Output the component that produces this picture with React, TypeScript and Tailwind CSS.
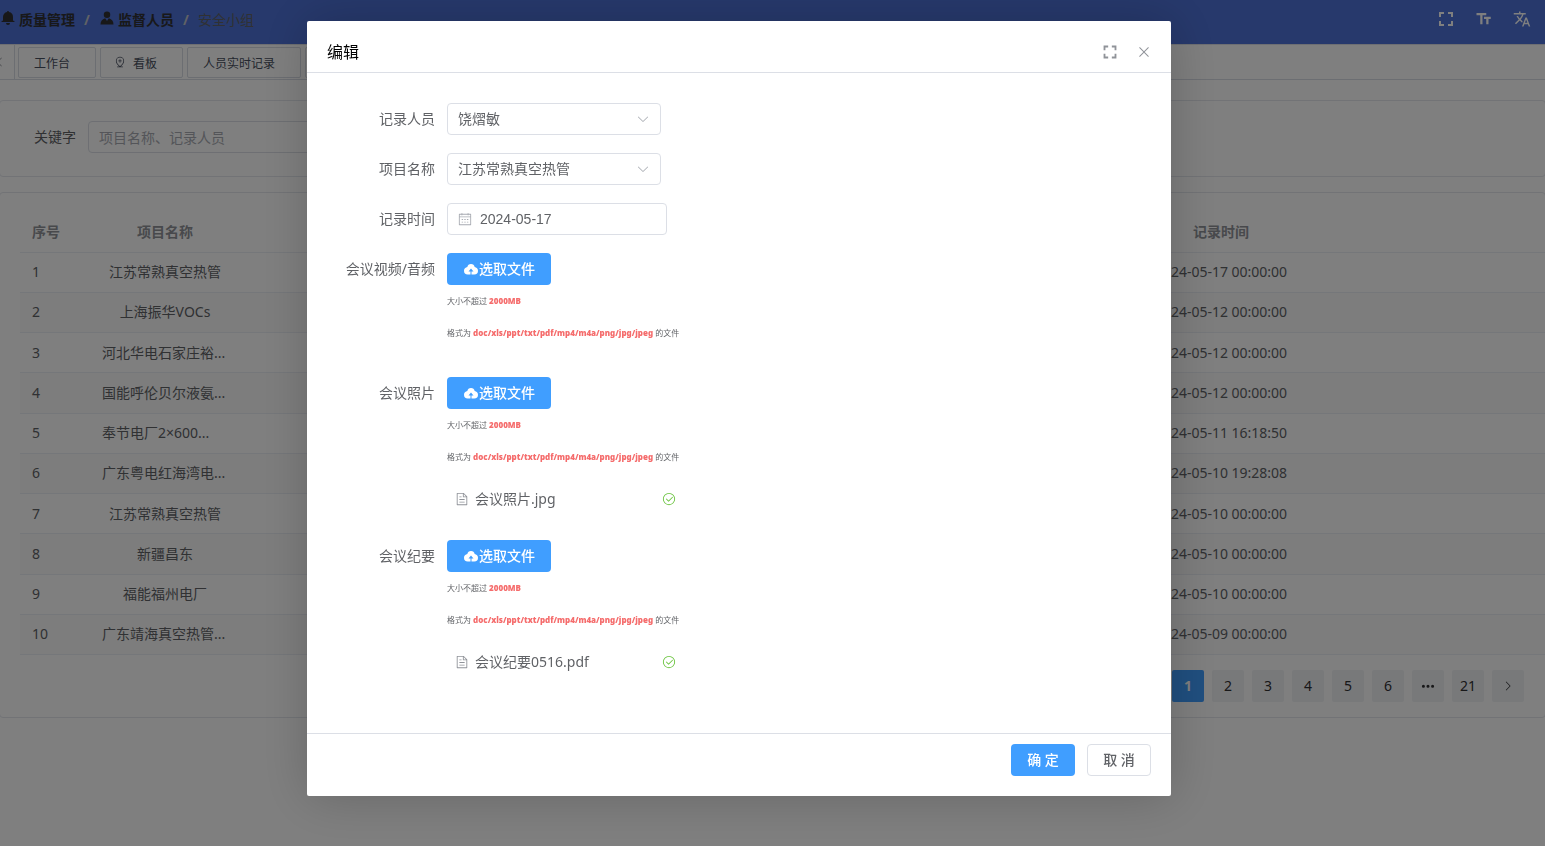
import { useState } from "react";
import type { ReactNode } from "react";
import { MdFullscreen, MdTranslate } from "react-icons/md";
import clsx from "clsx";

const ICONS = {
  bell: "M640 832a128 128 0 0 1-256 0h256zm192-64H134.4a38.4 38.4 0 0 1 0-76.8H192V448c0-154.88 110.08-284.16 256.32-313.6a64 64 0 1 1 127.36 0A320.128 320.128 0 0 1 832 448v243.2h57.6a38.4 38.4 0 0 1 0 76.8H832z",
  avatar:
    "M628.736 528.896A416 416 0 0 1 928 928H96a415.872 415.872 0 0 1 299.264-399.104L512 704l116.736-175.104zM720 304a208 208 0 1 1-416 0 208 208 0 0 1 416 0z",
  addLocation:
    "M288 896h448q32 0 32 32t-32 32H288q-32 0-32-32t32-32zM800 416a288 288 0 1 0-576 0c0 118.144 94.528 272.128 288 456.576C705.472 688.128 800 534.144 800 416zM512 960C277.312 746.688 160 565.312 160 416a352 352 0 0 1 704 0c0 149.312-117.312 330.688-352 544zM544 384h96a32 32 0 1 1 0 64h-96v96a32 32 0 0 1-64 0v-96h-96a32 32 0 0 1 0-64h96v-96a32 32 0 0 1 64 0v96z",
  uploadFilled:
    "M544 864V672h128L512 480 352 672h128v192H320v-1.6c-5.376.32-10.496 1.6-16 1.6A240 240 0 0 1 64 624c0-123.136 93.12-223.488 212.608-237.248A239.808 239.808 0 0 1 512 192a239.872 239.872 0 0 1 235.456 194.752c119.488 13.76 212.48 114.112 212.48 237.248a240 240 0 0 1-240 240c-5.376 0-10.56-1.28-16-1.6v1.6H544z",
  document:
    "M832 384H576V128H192v768h640V384zm-26.496-64L640 154.496V320h165.504zM160 64h480l256 256v608a32 32 0 0 1-32 32H160a32 32 0 0 1-32-32V96a32 32 0 0 1 32-32zm160 448h384v64H320v-64zm0-192h160v64H320v-64zm0 384h384v64H320v-64z",
  circleCheck:
    "M512 896a384 384 0 1 0 0-768 384 384 0 0 0 0 768zm0 64a448 448 0 1 1 0-896 448 448 0 0 1 0 896zM745.344 361.344a32 32 0 0 1 45.312 45.312l-288 288a32 32 0 0 1-45.312 0l-160-160a32 32 0 1 1 45.312-45.312L480 626.752l265.344-265.344z",
  calendar:
    "M128 384v512h768V192H768v32a32 32 0 1 1-64 0v-32H320v32a32 32 0 0 1-64 0v-32H128v128h768v64H128zm192-256h384V96a32 32 0 1 1 64 0v32h160a32 32 0 0 1 32 32v768a32 32 0 0 1-32 32H96a32 32 0 0 1-32-32V160a32 32 0 0 1 32-32h160V96a32 32 0 0 1 64 0v32zm-32 384h64a32 32 0 0 1 0 64h-64a32 32 0 0 1 0-64zm0 192h64a32 32 0 1 1 0 64h-64a32 32 0 1 1 0-64zm192-192h64a32 32 0 0 1 0 64h-64a32 32 0 0 1 0-64zm0 192h64a32 32 0 1 1 0 64h-64a32 32 0 1 1 0-64zm192-192h64a32 32 0 1 1 0 64h-64a32 32 0 1 1 0-64zm0 192h64a32 32 0 1 1 0 64h-64a32 32 0 1 1 0-64z",
  arrowDown:
    "M831.872 340.864 512 652.672 192.128 340.864a30.592 30.592 0 0 0-42.752 0 29.12 29.12 0 0 0 0 41.6L489.664 714.24a32 32 0 0 0 44.672 0l340.288-331.712a29.12 29.12 0 0 0 0-41.728 30.592 30.592 0 0 0-42.752 0z",
  arrowRight:
    "M340.864 149.312a30.592 30.592 0 0 0 0 42.752L652.736 512 340.864 831.872a30.592 30.592 0 0 0 0 42.752 29.12 29.12 0 0 0 41.728 0L714.24 534.336a32 32 0 0 0 0-44.672L382.592 149.376a29.12 29.12 0 0 0-41.728 0z",
  arrowLeft:
    "M609.408 149.376 277.76 489.6a32 32 0 0 0 0 44.672l331.648 340.352a29.12 29.12 0 0 0 41.728 0 30.592 30.592 0 0 0 0-42.752L339.264 511.936l311.872-319.872a30.592 30.592 0 0 0 0-42.688 29.12 29.12 0 0 0-41.728 0z",
  close:
    "M764.288 214.592 512 466.88 259.712 214.592a31.936 31.936 0 0 0-45.12 45.12L466.752 512 214.528 764.224a31.936 31.936 0 1 0 45.12 45.184L512 557.184l252.288 252.288a31.936 31.936 0 0 0 45.12-45.12L557.12 512.064l252.288-252.352a31.936 31.936 0 1 0-45.12-45.184z",
  more: "M176 416a112 112 0 1 1 0 224 112 112 0 0 1 0-224zm336 0a112 112 0 1 1 0 224 112 112 0 0 1 0-224zm336 0a112 112 0 1 1 0 224 112 112 0 0 1 0-224z",
};

const ROWS = [
  { name: "江苏常熟真空热管", time: "2024-05-17 00:00:00" },
  { name: "上海振华VOCs", time: "2024-05-12 00:00:00" },
  { name: "河北华电石家庄裕...", time: "2024-05-12 00:00:00" },
  { name: "国能呼伦贝尔液氨...", time: "2024-05-12 00:00:00" },
  { name: "奉节电厂2×600...", time: "2024-05-11 16:18:50" },
  { name: "广东粤电红海湾电...", time: "2024-05-10 19:28:08" },
  { name: "江苏常熟真空热管", time: "2024-05-10 00:00:00" },
  { name: "新疆昌东", time: "2024-05-10 00:00:00" },
  { name: "福能福州电厂", time: "2024-05-10 00:00:00" },
  { name: "广东靖海真空热管...", time: "2024-05-09 00:00:00" },
];

const FILE_TYPES = "doc/xls/ppt/txt/pdf/mp4/m4a/png/jpg/jpeg";

function Icon({ name, className }: { name: keyof typeof ICONS; className?: string }) {
  return (
    <svg viewBox="0 0 1024 1024" fill="currentColor" aria-hidden="true" className={clsx("shrink-0", className)}>
      <path d={ICONS[name]} />
    </svg>
  );
}

function TopBar() {
  return (
    <header className="flex h-[45px] items-center justify-between border-b border-[#dcdfe6] bg-[#4e72d8] pr-[11px]">
      <nav className="flex items-center pb-1 text-sm text-[#303133]">
        <a href="#quality" className="flex items-center gap-[3px] font-bold">
          <Icon name="bell" className="mb-1 h-4 w-4" />
          质量管理
        </a>
        <span className="w-6 text-center font-bold text-[#c0c4cc]">/</span>
        <a href="#staff" className="flex items-center gap-[3px] font-bold">
          <Icon name="avatar" className="mb-1 h-4 w-4" />
          监督人员
        </a>
        <span className="w-6 text-center font-bold text-[#c0c4cc]">/</span>
        <span className="text-[#606266]">安全小组</span>
      </nav>
      <div className="flex items-center gap-3.5 pb-1.5 text-white">
        <button type="button" aria-label="全屏" className="flex h-6 w-6 items-center justify-center">
          <MdFullscreen className="h-6 w-6" />
        </button>
        <button type="button" aria-label="字号" className="flex h-6 w-6 items-center justify-center">
          <svg viewBox="0 0 24 24" fill="currentColor" className="h-[18px] w-[18px]">
            <path d="M2 4v3h5v12h3V7h5V4H2zm19 5h-9v3h3v7h3v-7h3V9z" />
          </svg>
        </button>
        <button type="button" aria-label="语言" className="flex h-6 w-6 items-center justify-center">
          <MdTranslate className="h-[18px] w-[18px]" />
        </button>
      </div>
    </header>
  );
}

function Tab({ label, pinned }: { label?: string; pinned?: boolean }) {
  return (
    <button
      type="button"
      className={clsx(
        "flex h-[31px] items-center gap-[7px] rounded-xs border border-[#d8dce5] pt-0.5 pr-[25px] text-xs text-[#495060]",
        pinned ? "pl-[13px]" : "pl-[15px]",
      )}
    >
      {pinned && <Icon name="addLocation" className="mb-1 h-3 w-3" />}
      {label}
    </button>
  );
}

function TabBar() {
  return (
    <div className="flex h-[35px] items-stretch border-b border-[#d8dce5]">
      <button type="button" aria-label="向左" className="mr-[3px] flex w-[15px] items-center border-r border-[#d8dce5] text-[#909399]">
        <Icon name="arrowLeft" className="-ml-1.5 h-3 w-3" />
      </button>
      <div className="flex items-center gap-1 pt-px">
        <Tab label="工作台" />
        <Tab label="看板" pinned />
        <Tab label="人员实时记录" />
        <Tab />
      </div>
    </div>
  );
}

function RecordTable() {
  return (
    <table className="h-[442px] w-full table-fixed text-sm text-[#606266]">
      <colgroup>
        <col className="w-[70px]" />
        <col className="w-[150px]" />
        <col />
        <col className="w-[150px]" />
        <col className="w-[249px]" />
      </colgroup>
      <thead>
        <tr className="h-[39px] border-b border-[#ebeef5] text-[#909399]">
          <th className="px-3 text-left font-bold">序号</th>
          <th className="px-3 text-center font-bold">项目名称</th>
          <th />
          <th className="px-3 text-center font-bold">记录时间</th>
          <th />
        </tr>
      </thead>
      <tbody>
        {ROWS.map((row, i) => (
          <tr key={i} className="border-b border-[#ebeef5] even:bg-[#fafafa]">
            <td className="px-3">{i + 1}</td>
            <td className={clsx("px-3 whitespace-nowrap", row.name.endsWith("...") ? "text-left" : "text-center")}>
              {row.name}
            </td>
            <td />
            <td className="text-center whitespace-nowrap">{row.time}</td>
            <td />
          </tr>
        ))}
      </tbody>
    </table>
  );
}

function Pagination() {
  const pages = ["1", "2", "3", "4", "5", "6", "more", "21", "next"];
  return (
    <div className="flex justify-end gap-2 pt-[15px] pr-[21px] text-sm text-[#303133]">
      {pages.map((p) => (
        <button
          key={p}
          type="button"
          aria-label={p}
          className={clsx(
            "flex h-8 w-8 items-center justify-center rounded-xs",
            p === "1" ? "bg-[#409eff] font-bold text-white" : "bg-[#f0f2f5]",
          )}
        >
          {p === "more" ? (
            <Icon name="more" className="h-3.5 w-3.5" />
          ) : p === "next" ? (
            <Icon name="arrowRight" className="h-3 w-3" />
          ) : (
            p
          )}
        </button>
      ))}
    </div>
  );
}

function FormItem({ label, htmlFor, children }: { label: string; htmlFor: string; children: ReactNode }) {
  return (
    <div className="mb-[18px] flex items-start">
      <label htmlFor={htmlFor} className="w-[120px] pr-3 text-right text-sm leading-8 text-[#606266]">
        {label}
      </label>
      {children}
    </div>
  );
}

function SelectField({ id, value }: { id: string; value: string }) {
  return (
    <div className="relative">
      <select
        id={id}
        defaultValue={value}
        className="h-8 w-[214px] appearance-none rounded border border-[#dcdfe6] bg-white px-2.5 text-sm text-[#606266] outline-none focus:border-[#409eff]"
      >
        <option>{value}</option>
      </select>
      <Icon name="arrowDown" className="pointer-events-none absolute top-[9px] right-[11px] h-3.5 w-3.5 text-[#a8abb2]" />
    </div>
  );
}

function UploadField({ id, file }: { id: string; file?: string }) {
  return (
    <div className="w-[234px] whitespace-nowrap text-[#606266]">
      <button
        id={id}
        type="button"
        className="flex h-8 w-[104px] items-center justify-center rounded bg-[#409eff] text-sm font-medium text-white hover:bg-[#79bbff]"
      >
        <Icon name="uploadFilled" className="h-4 w-4" />
        选取文件
      </button>
      <p className="text-[8px] leading-8">
        大小不超过 <b className="font-black text-[#f56c6c]">2000MB</b>
      </p>
      <p className="text-[8px] leading-8">
        格式为 <b className="font-black text-[#f56c6c]">{FILE_TYPES}</b> 的文件
      </p>
      <ul className="mt-2.5">
        {file && (
          <li className="mb-[7px] flex h-8 items-center justify-between pr-[5px] pl-2">
            <a href="#file" className="flex items-center gap-1.5 text-sm">
              <Icon name="document" className="h-3.5 w-3.5 text-[#909399]" />
              {file}
            </a>
            <Icon name="circleCheck" className="h-3.5 w-3.5 text-[#67c23a]" />
          </li>
        )}
      </ul>
    </div>
  );
}

function EditDialog({ onClose }: { onClose: () => void }) {
  const [date, setDate] = useState("2024-05-17");

  return (
    <div className="fixed inset-0 overflow-auto bg-black/50">
      <div className="flex items-start justify-center pt-[21px] pr-[67px]">
        <div
          role="dialog"
          aria-labelledby="dialog-title"
          className="w-[864px] max-w-full rounded-xs bg-white shadow-[1px_1px_50px_rgba(0,0,0,0.2)]"
        >
          <div className="flex h-[52px] items-center justify-between border-b border-[#dcdfe6] pt-2.5 pr-[19px] pl-5">
            <h2 id="dialog-title" className="text-base text-black">
              编辑
            </h2>
            <div className="flex items-center gap-[15px] text-[#909399]">
              <button type="button" aria-label="全屏">
                <MdFullscreen className="h-[22px] w-[22px]" />
              </button>
              <button type="button" aria-label="关闭" onClick={onClose}>
                <Icon name="close" className="h-4 w-4" />
              </button>
            </div>
          </div>

          <form className="px-5 py-[30px]">
            <FormItem label="记录人员" htmlFor="recorder">
              <SelectField id="recorder" value="饶熠敏" />
            </FormItem>
            <FormItem label="项目名称" htmlFor="project">
              <SelectField id="project" value="江苏常熟真空热管" />
            </FormItem>
            <FormItem label="记录时间" htmlFor="date">
              <div className="flex h-8 w-[220px] items-center gap-2 rounded border border-[#dcdfe6] px-2.5 focus-within:border-[#409eff]">
                <Icon name="calendar" className="h-3.5 w-3.5 text-[#a8abb2]" />
                <input
                  id="date"
                  value={date}
                  onChange={(e) => setDate(e.target.value)}
                  className="w-full font-['Liberation_Sans',sans-serif] text-sm text-[#606266] outline-none"
                />
              </div>
            </FormItem>
            <FormItem label="会议视频/音频" htmlFor="media">
              <UploadField id="media" />
            </FormItem>
            <FormItem label="会议照片" htmlFor="photo">
              <UploadField id="photo" file="会议照片.jpg" />
            </FormItem>
            <FormItem label="会议纪要" htmlFor="minutes">
              <UploadField id="minutes" file="会议纪要0516.pdf" />
            </FormItem>
          </form>

          <div className="flex justify-end gap-3 border-t border-[#dcdfe6] px-5 pt-2.5 pb-5 text-sm font-medium">
            <button type="button" onClick={onClose} className="h-8 w-16 rounded bg-[#409eff] text-white">
              确 定
            </button>
            <button type="button" onClick={onClose} className="h-8 w-16 rounded border border-[#dcdfe6] text-[#606266]">
              取 消
            </button>
          </div>
        </div>
      </div>
    </div>
  );
}

export default function App() {
  const [open, setOpen] = useState(true);

  return (
    <div className="min-h-screen overflow-x-hidden bg-white font-['Noto_Sans','Noto_Sans_CJK_SC',sans-serif]">
      <TopBar />
      <TabBar />
      <main className="-mx-px flex flex-col gap-[15px] pt-5">
        <section className="rounded border border-[#e4e7ed] px-5 pt-5 pb-[23px]">
          <div className="flex items-center pl-3.5">
            <label htmlFor="keyword" className="pr-3 text-sm text-[#606266]">
              关键字
            </label>
            <input
              id="keyword"
              placeholder="项目名称、记录人员"
              className="h-8 w-60 rounded border border-[#dcdfe6] px-2.5 text-sm outline-none placeholder:text-[#a8abb2]"
            />
          </div>
        </section>
        <section className="rounded border border-[#e4e7ed] pt-5 pb-[15px] pl-5">
          <RecordTable />
          <Pagination />
        </section>
      </main>
      {open && <EditDialog onClose={() => setOpen(false)} />}
    </div>
  );
}
